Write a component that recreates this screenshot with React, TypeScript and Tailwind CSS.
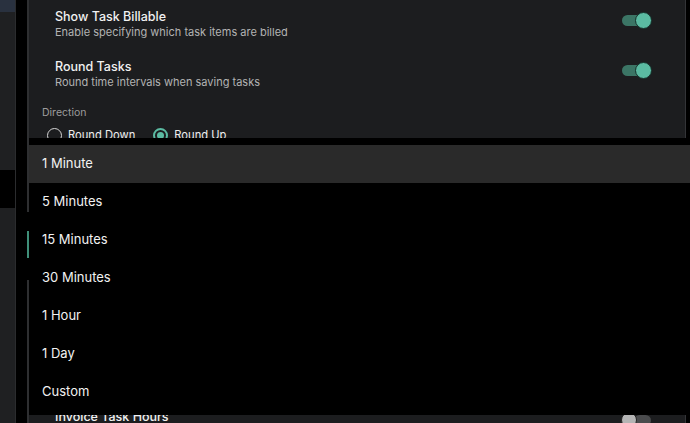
import React from 'react'

const options = ['1 Minute', '5 Minutes', '15 Minutes', '30 Minutes', '1 Hour', '1 Day', 'Custom']

const Toggle = ({ on }: { on: boolean }) => {
  if (!on) {
    return (
      <div className="relative w-[31px] h-[17px] shrink-0">
        <div className="absolute left-[13px] top-[3px] w-[17px] h-[11px] rounded-full bg-[#4a4b4d]" />
        <div className="absolute left-0 top-0 w-[16px] h-[16px] rounded-full bg-[#b4b4b4] border border-[#222]" />
      </div>
    )
  }
  return (
    <div className="relative w-[30px] h-[17px] shrink-0">
      <div className="absolute left-0 top-[3px] w-[26px] h-[11px] rounded-full bg-[#3b7565]" />
      <div className="absolute right-0 top-0 w-[17px] h-[17px] rounded-full bg-[#5bbba2] border border-[#15302a]" />
    </div>
  )
}

const SettingRow = ({ title, desc, on }: { title: string; desc?: string; on: boolean }) => (
  <div className="flex items-start justify-between pl-[26px] pr-[33px]">
    <div>
      <div className="text-[12.5px] leading-[17px] font-medium text-[#f1f1f1]">{title}</div>
      {desc && <div className="text-[11px] leading-[15px] text-[#b3b3b3]">{desc}</div>}
    </div>
    <div className="mt-[4px]">
      <Toggle on={on} />
    </div>
  </div>
)

export default function App() {
  return (
    <div
      className="relative flex w-[690px] h-[423px] overflow-hidden bg-black"
      style={{ fontFamily: 'Inter, "Liberation Sans", sans-serif' }}
    >
      {/* sidebar sliver */}
      <div className="flex flex-col w-[15px] shrink-0">
        <div className="h-[12px] bg-[#29313f]" />
        <div className="h-[158px] bg-[#1f2022]" />
        <div className="h-[38px] bg-black" />
        <div className="flex-1 bg-[#1f2022]" />
      </div>
      <div className="w-px bg-[#2b2c2e] shrink-0" />
      <div className="w-[11px] shrink-0" />
      {/* panel left edge */}
      <div className="flex flex-col w-[2px] shrink-0">
        <div className="h-[212px] bg-[#2e2f31]" />
        <div className="h-[19px]" />
        <div className="h-[27px] bg-[#3f8f79]" />
        <div className="h-[22px]" />
        <div className="flex-1 bg-[#2e2f31]" />
      </div>

      {/* settings panel */}
      <div className="flex flex-col w-[657px] shrink-0 bg-[#1c1d1f] border-r border-[#333437]">
        <div className="pt-[8px]">
          <SettingRow title="Show Task Billable" desc="Enable specifying which task items are billed" on />
        </div>
        <div className="pt-[18px]">
          <SettingRow title="Round Tasks" desc="Round time intervals when saving tasks" on />
        </div>
        <div className="pl-[13px] mt-[16px] text-[10.5px] leading-[14px] text-[#9c9c9c]">Direction</div>
        <div className="flex items-center pl-[18px] mt-[5px] h-[20px] text-[11.2px] text-[#eeeeee]">
          <div className="w-[15px] h-[15px] rounded-full border-[1.5px] border-[#d6d6d6]" />
          <span className="ml-[6px]">Round Down</span>
          <div className="ml-[18px] w-[15px] h-[15px] rounded-full border-2 border-[#5bbba2] flex items-center justify-center">
            <div className="w-[7px] h-[7px] rounded-full bg-[#5bbba2]" />
          </div>
          <span className="ml-[6px]">Round Up</span>
        </div>
        <div className="flex-1" />
        <div className="h-[15px]">
          <SettingRow title="Invoice Task Hours" on={false} />
        </div>
      </div>

      {/* interval dropdown menu */}
      <div className="absolute left-[29px] right-0 top-[138px] h-[277px] bg-black pt-[7px]">
        {options.map((o, i) => (
          <div
            key={o}
            className={`h-[38px] flex items-center px-[13px] text-[13px] text-[#f2f2f2] ${i === 0 ? 'bg-[#2a2a2a]' : ''}`}
          >
            {o}
          </div>
        ))}
      </div>
    </div>
  )
}
